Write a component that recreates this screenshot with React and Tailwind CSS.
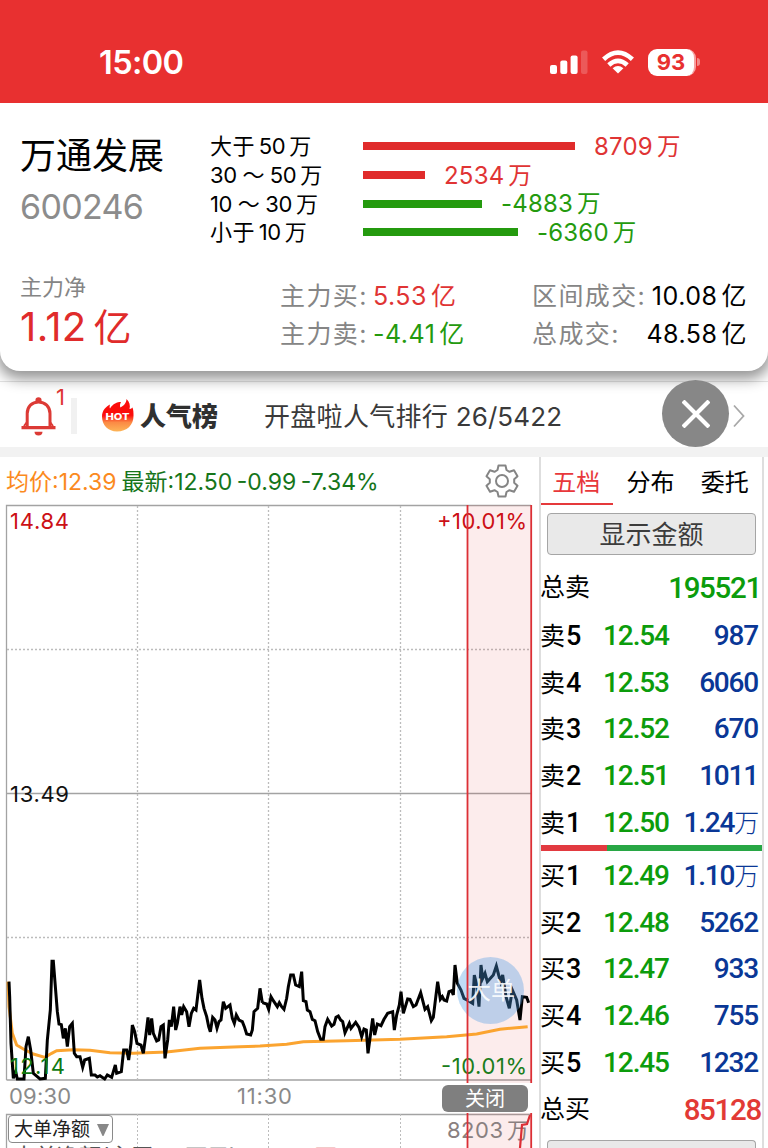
import clsx from 'clsx'

const FLOWS = [
  { label: ['大于', '50', '万'], width: 212, value: '8709', up: true },
  { label: ['', '30 ～ 50', '万'], width: 62, value: '2534', up: true },
  { label: ['', '10 ～ 30', '万'], width: 119, value: '-4883', up: false },
  { label: ['小于', '10', '万'], width: 155, value: '-6360', up: false },
]

const SELLS = [
  ['5', '12.54', '987'],
  ['4', '12.53', '6060'],
  ['3', '12.52', '670'],
  ['2', '12.51', '1011'],
  ['1', '12.50', '1.24万'],
]

const BUYS = [
  ['1', '12.49', '1.10万'],
  ['2', '12.48', '5262'],
  ['3', '12.47', '933'],
  ['4', '12.46', '755'],
  ['5', '12.45', '1232'],
]

// price line, third-of-a-pixel units, morning then afternoon
const PRICE_AM =
  '27,155 29,200 33,340 40,445 47,425 52,447 72,447 78,350 85,320 92,360 100,430 120,447 136,445 142,330 151,240 156,94 160,94 172,245 177,282 184,284 190,325 196,295 202,350 209,290 217,280 223,370 230,380 240,380 248,412 254,390 268,385 274,435 285,435 292,441 300,437 314,447 322,435 335,442 346,405 350,430 364,425 371,360 380,360 386,390 393,340 397,285 404,305 411,340 423,345 430,370 437,320 444,262 449,315 455,265 460,310 470,333 476,330 483,290 490,285 495,385 503,330 508,270 514,290 521,230 527,300 532,280 540,230 545,255 551,230 560,245 567,290 574,250 581,235 588,240 599,150 606,205 612,235 620,260 626,290 631,305 638,262 645,270 651,295 657,275 663,270 670,215 677,235 690,225 697,265 703,280 709,255 717,270 727,275 733,290 740,312 752,315 757,300 762,245 773,235 780,175 787,218'
const PRICE_PM =
  '7,218 20,222 26,238 33,200 40,212 52,230 58,218 65,230 72,238 80,205 85,170 92,135 100,135 107,165 118,170 125,125 130,212 138,215 142,240 150,245 157,268 165,272 173,305 182,328 190,328 195,290 203,268 215,288 222,283 228,262 235,258 242,270 248,275 255,308 268,280 273,295 287,277 297,292 305,320 312,297 319,300 324,370 332,310 338,265 344,315 352,282 363,287 372,268 383,250 398,245 403,300 410,255 418,225 423,185 430,250 443,207 450,208 460,230 468,225 482,188 489,215 495,238 503,230 514,272 520,262 525,220 533,155 541,208 547,200 552,210 560,213 567,185 575,182 580,195 585,105 592,160 603,180 612,205 625,212 638,220 643,135 650,165 657,230 663,105 668,145 675,130 682,155 700,135 709,108 716,135 722,155 728,135 738,200 748,235 757,180 770,210 780,270 787,200 800,202 806,218'
const AVERAGE =
  '24,155 27,230 37,310 50,345 70,357 100,372 135,382 155,370 170,362 220,359 270,361 330,368 400,370 500,366 600,355 720,350 780,348 860,343 910,335 1040,332 1200,328 1340,320 1430,312 1500,298 1583,290'

function StatusBar() {
  return (
    <header className="flex h-[103px] items-center bg-[#e83030] pt-[21px] pl-[99px] text-white">
      <span className="w-[451px] pt-[2px] text-[32.5px] font-semibold tracking-[-0.6px]">15:00</span>
      <svg className="h-[24px] w-[38px]" viewBox="0 0 38 24" fill="currentColor">
        <rect x="0" y="15" width="7" height="9" rx="2" />
        <rect x="10.3" y="10.5" width="7" height="13.5" rx="2" />
        <rect x="20.6" y="5.5" width="7" height="18.5" rx="2" />
        <rect x="31" y="0.5" width="6.5" height="23.5" rx="2" opacity="0.2" />
      </svg>
      <svg className="ml-[14px] h-[24px] w-[32px]" viewBox="0 0 32 24" fill="none" stroke="currentColor" strokeWidth="4.6">
        <path d="M1.6 9.3Q16 -4 30.4 9.3" />
        <path d="M6.8 15Q16 6.6 25.2 15" />
        <path d="M16 23.4L10.6 18.2Q16 13.6 21.4 18.2Z" fill="currentColor" stroke="none" />
      </svg>
      <div className="ml-[14px] flex items-center">
        <span className="flex h-[27px] w-[48px] items-center justify-center rounded-[9px] border-r-2 border-[#f6a0a0] bg-white text-[22px] font-bold text-[#e83030]">
          93
        </span>
        <span className="ml-px h-[8px] w-[3px] rounded-r-full bg-[#f18a8a]" />
      </div>
    </header>
  )
}

function Amount({ value, className }) {
  return (
    <span className={clsx('flex gap-[4px] tracking-[0.5px]', className)}>
      {value}
      <span>亿</span>
    </span>
  )
}

function Summary() {
  return (
    <section className="relative z-10 h-[268px] rounded-b-[20px] bg-white px-[20px] pt-[29px] shadow-[0_5px_14px_3px_rgba(0,0,0,0.42)] [clip-path:inset(0_0_-40px_0)]">
      <div className="flex">
        <div className="w-[190px]">
          <h1 className="h-[49px] text-[36px] leading-[48px]">万通发展</h1>
          <div className="text-[34px] leading-[51px] tracking-[-0.7px] text-[#8c8c8c]">600246</div>
        </div>
        <div>
          {FLOWS.map((f) => (
            <div key={f.value} className="flex h-[28.7px] items-center">
              <span className="flex w-[153px] gap-[4px] text-[22px] leading-none">
                {f.label[0] && <span className="tracking-[0.4px]">{f.label[0]}</span>}
                <span className="tracking-[-0.4px]">{f.label[1]}</span>
                <span>{f.label[2]}</span>
              </span>
              <span className={clsx('h-[8px]', f.up ? 'bg-[#e02b2b]' : 'bg-[#249a0e]')} style={{ width: f.width }} />
              <span className={clsx('ml-[19px] flex gap-[4px] pt-px text-[24px] leading-none', f.up ? 'text-[#e03434]' : 'text-[#249a0e]')}>
                <span className="tracking-[0.2px]">{f.value}</span>
                <span className="text-[23.5px]">万</span>
              </span>
            </div>
          ))}
        </div>
      </div>
      <div className="mt-[27px] flex">
        <div className="w-[260px]">
          <div className="text-[22px] leading-[27px] text-[#858585]">主力净</div>
          <div className="flex gap-[7px] text-[40px] leading-[52px] tracking-[0.4px] text-[#e02b2b]">
            1.12<span className="text-[38px]">亿</span>
          </div>
        </div>
        <div className="w-[252px] pt-[3px] text-[25px] leading-[38px] text-[#858585]">
          <div className="flex">
            <span className="w-[93px] tracking-[1.4px]">主力买:</span>
            <Amount value="5.53" className="text-[#e03434]" />
          </div>
          <div className="flex">
            <span className="w-[93px] tracking-[1.4px]">主力卖:</span>
            <Amount value="-4.41" className="text-[#249a0e]" />
          </div>
        </div>
        <div className="w-[215px] pt-[3px] text-[25px] leading-[38px] text-[#858585]">
          <div className="flex justify-between">
            <span className="tracking-[1.4px]">区间成交:</span>
            <Amount value="10.08" className="text-black" />
          </div>
          <div className="flex justify-between">
            <span className="tracking-[1.4px]">总成交:</span>
            <Amount value="48.58" className="text-black" />
          </div>
        </div>
      </div>
    </section>
  )
}

function HotRow() {
  return (
    <section className="h-[86px] border-b-[10px] border-[#f2f2f2] pt-[10px]">
      <div className="relative flex h-[66px] items-center border-t border-[#e4e4e4] pl-[21px]">
        <svg className="mt-[4px] h-[39px] w-[35px]" viewBox="0 0 35 39" fill="none" stroke="#dc3a35" strokeWidth="3">
          <path d="M6.2 31V16.5C6.2 9.5 11 5 17.5 5S29 9.5 29 16.5V31" />
          <path d="M0.5 30.7H34.5" strokeWidth="3.2" />
          <path d="M3 29L6 25M32 29L29 25" strokeWidth="2" />
          <path d="M14.5 5V2.8A3 2.6 0 0 1 20.5 2.8V5Z" fill="#dc3a35" stroke="none" />
          <path d="M13.5 34.8H21.5A4 3.6 0 0 1 13.5 34.8Z" fill="#dc3a35" stroke="none" />
        </svg>
        <span className="w-[15px] self-start pt-[4px] text-[22px] leading-[22px] text-[#e03434]">1</span>
        <span className="mt-[2px] h-[36px] w-[6px] bg-[#f1f1f1]" />
        <svg className="ml-[24px] h-[34px] w-[33px]" viewBox="0 0 33 34">
          <defs>
            <linearGradient id="flame" x1="0" y1="0" x2="0" y2="1">
              <stop offset="0.5" stopColor="#fb0d0b" />
              <stop offset="0.72" stopColor="#fb8a45" />
              <stop offset="1" stopColor="#fdb557" />
            </linearGradient>
          </defs>
          <path
            d="M16 33.5C7 33.5 1 27 1 18.5C1 12 5.5 8.5 9 6.5C8.5 8.5 8.5 9.5 9 10.5C12 5.5 16 4 20 4C19 6 18.5 8 19.5 9.5C22.5 8 25.5 5 25.5 1C28.5 4 29.5 7.5 28.5 11C29.5 11 30.5 10.5 31.5 9.5C32.5 12 32.5 15 32.5 18C32.5 27 26 33.5 16 33.5Z"
            fill="url(#flame)"
          />
          <text x="16.5" y="22" textAnchor="middle" fill="#fff" fontSize="9" fontWeight="800" textLength="24" lengthAdjust="spacingAndGlyphs">
            HOT
          </text>
        </svg>
        <span className="ml-[6px] w-[124px] pt-[3px] text-[26px] font-black text-[#2f3030]">人气榜</span>
        <span className="pt-[4px] text-[26px] tracking-[0.3px] text-[#3a3a3a]">
          开盘啦人气排行 <span className="tracking-[0.1px]">26/5422</span>
        </span>
        <svg className="absolute top-[22px] left-[733px] h-[24px] w-[12px]" viewBox="0 0 12 24" fill="none" stroke="#a8a8a8" strokeWidth="1.8">
          <path d="M1 1.5L10.5 12L1 22.5" />
        </svg>
        <button className="absolute -top-[2px] left-[662px] z-20 flex size-[67px] items-center justify-center rounded-full bg-[#878787]">
          <svg className="size-[28px]" viewBox="0 0 28 28" stroke="#fff" strokeWidth="4.2">
            <path d="M1 1L27 27M27 1L1 27" />
          </svg>
        </button>
      </div>
    </section>
  )
}

function PriceChart() {
  return (
    <svg className="block h-[580px] w-[539px]" viewBox="0 504 539 580" fontSize="22">
      <g fill="none" stroke="#a3a3a3" strokeWidth="1.3">
        <path d="M6.5 1080V505.5H531M6.5 793.5H531M6.5 1080H531" />
        <path d="M137.5 506V1080M268.5 506V1080M400.5 506V1080M7 649.5H531M7 937.5H531" strokeDasharray="2 2" stroke="#bcbcbc" />
      </g>
      <rect x="467" y="505" width="64" height="578" fill="#e02b2b" fillOpacity="0.09" />
      <g transform="translate(0 930) scale(0.33333)" fill="none" strokeWidth="9" strokeLinejoin="miter">
        <polyline points={AVERAGE} stroke="#fba430" />
        <polyline points={PRICE_AM} stroke="#000" />
        <polyline points={PRICE_PM} stroke="#000" transform="translate(780 0)" />
      </g>
      <text x="10" y="529" fill="#cc1016" textLength="59">14.84</text>
      <text x="437" y="529" fill="#cc1016" textLength="90">+10.01%</text>
      <text x="10" y="802" fill="#111" textLength="59">13.49</text>
      <text x="10" y="1074" fill="#0f7a12" textLength="55">12.14</text>
      <text x="441" y="1074" fill="#1b7d1b" textLength="86">-10.01%</text>
      <circle cx="490.5" cy="990.5" r="33.5" fill="#4a9be4" fillOpacity="0.35" />
      <text x="467" y="999" fill="#fff" fillOpacity="0.9" fontSize="24" textLength="48">大单</text>
      <path d="M467.5 505V1083M531.2 505V1083" stroke="#dc2f35" strokeWidth="1.8" />
    </svg>
  )
}

function VolumeChart() {
  return (
    <div className="relative h-[35px] overflow-hidden">
      <svg className="block h-[35px] w-[539px]" viewBox="0 1113 539 35" fontSize="22">
        <path d="M6.5 1148V1114.5H531" fill="none" stroke="#a3a3a3" strokeWidth="1.3" />
        <path d="M137.5 1114V1148M268.5 1114V1148M400.5 1114V1148" stroke="#bcbcbc" strokeDasharray="2 2" />
        <rect x="467" y="1113" width="64" height="35" fill="#e02b2b" fillOpacity="0.09" />
        <text x="447" y="1138" fill="#8a8080" textLength="56">8203</text>
        <text x="507" y="1138" fill="#8a8080">万</text>
        <path d="M520 1148L522 1125L527 1124L530 1115" fill="none" stroke="#dc2f35" strokeWidth="2.2" />
        <path d="M467.5 1113V1148M531.2 1113V1148" stroke="#dc2f35" strokeWidth="1.8" />
      </svg>
      <button className="absolute top-[2px] left-[8px] flex h-[28px] w-[105px] items-center gap-[7px] rounded-[4px] border-[1.5px] border-[#8a8a8a] bg-white pt-px pl-[5px] text-[19px] leading-none whitespace-nowrap text-[#222]">
        大单净额
        <svg className="h-[12px] w-[12px] shrink-0" viewBox="0 0 12 12" fill="#888">
          <path d="M0 0H12L6.5 12H5.5Z" />
        </svg>
      </button>
      <div className="absolute top-[30px] left-[13px] flex text-[22px] leading-[26px] whitespace-nowrap text-[#555]">
        <span className="w-[145px]">大单净额(主买</span>
        <span className="w-[110px] text-[#999]">20万元)</span>
        <span className="text-[#eaa5a5]">0.00万</span>
      </div>
    </div>
  )
}

function QuoteRow({ side, level, price, amount }) {
  const wan = amount.endsWith('万')
  return (
    <div className="flex h-[46.8px] items-center pt-[3px] font-[Roboto,'Noto_Sans_CJK_SC',sans-serif] text-[28px] font-medium">
      <span className="-ml-px w-[63px] whitespace-nowrap text-black">
        <span className="text-[25px] font-normal">{side}</span>
        <span className="ml-px text-[27px]">{level}</span>
      </span>
      <span className="tracking-[-1.1px] text-[#0c9c0c]">{price}</span>
      <span className="ml-auto pr-[4px] tracking-[-1.2px] whitespace-nowrap text-[#0a3796]">
        {wan ? amount.slice(0, -1) : amount}
        {wan && <span className="text-[25px] font-light">万</span>}
      </span>
    </div>
  )
}

function TotalRow({ label, value, className }) {
  return (
    <div className="flex h-[48px] items-center justify-between pt-px font-[Roboto,'Noto_Sans_CJK_SC',sans-serif]">
      <span className="-ml-px pt-px text-[25px]">{label}</span>
      <span className={clsx('pr-px pt-px text-[29.5px] font-medium tracking-[-1.3px]', className)}>{value}</span>
    </div>
  )
}

function OrderBook() {
  return (
    <aside className="h-[691px] w-[225px] border-x-2 border-[#dedede]">
      <nav className="flex h-[48px] text-[24px] leading-[52px]">
        <span className="w-[73px] border-b-[2.5px] border-[#e5393b] pr-[2px] text-center text-[#e8383b]">五档</span>
        <span className="w-[75px] text-center">分布</span>
        <span className="w-[75px] text-center">委托</span>
      </nav>
      <button className="mt-[8px] ml-[6px] flex h-[42px] w-[209px] items-center justify-center rounded-[4px] border-[1.5px] border-[#a5a5a5] bg-[#e9e9e9] pt-[2px] text-[26px] leading-none text-[#3c3c3c]">
        显示金额
      </button>
      <div className="mt-[8px]">
        <TotalRow label="总卖" value="195521" className="text-[#0c9c0c]" />
        {SELLS.map(([level, price, amount]) => (
          <QuoteRow key={level} side="卖" level={level} price={price} amount={amount} />
        ))}
        <div className="flex h-[6px]">
          <span className="w-[66px] bg-[#e23a40]" />
          <span className="flex-1 bg-[#28a745]" />
        </div>
        {BUYS.map(([level, price, amount]) => (
          <QuoteRow key={level} side="买" level={level} price={price} amount={amount} />
        ))}
        <TotalRow label="总买" value="85128" className="text-[#e23a35]" />
      </div>
      <div className="mt-[7px] ml-[6px] h-[10px] w-[209px] rounded-t-[4px] border-[1.5px] border-b-0 border-[#a5a5a5] bg-[#e9e9e9]" />
    </aside>
  )
}

export default function App() {
  return (
    <main className="h-[1148px] w-[768px] overflow-hidden bg-white font-[Inter,'Noto_Sans_CJK_SC',sans-serif] text-black">
      <StatusBar />
      <Summary />
      <HotRow />
      <div className="flex">
        <section className="w-[539px]">
          <div className="flex h-[47px] items-center justify-between pr-[20px] pl-[6px] text-[23px]">
            <span className="flex gap-[5px] pt-[3px] whitespace-nowrap [word-spacing:-2px]">
              <span className="text-[#fb8a1e]">均价:12.39</span>
              <span className="text-[#15751a]">最新:12.50 -0.99 -7.34%</span>
            </span>
            <svg className="size-[34px]" viewBox="0 0 34 34" fill="none" stroke="#858585" strokeWidth="2" strokeLinejoin="round">
              <path d="M13.5 1.5H20.5L21.5 6L24.5 7.8L29 6.3L32.5 12.3L29.2 15.3V18.7L32.5 21.7L29 27.7L24.5 26.2L21.5 28L20.5 32.5H13.5L12.5 28L9.5 26.2L5 27.7L1.5 21.7L4.8 18.7V15.3L1.5 12.3L5 6.3L9.5 7.8L12.5 6Z" />
              <circle cx="17" cy="17" r="6" />
            </svg>
          </div>
          <PriceChart />
          <div className="flex h-[29px] items-center text-[22px] text-[#8a8a8a]">
            <span className="w-[228px] pb-[4px] pl-[9px] tracking-[0.2px]">09:30</span>
            <span className="w-[214px] pb-[4px] pl-[9px] tracking-[0.8px]">11:30</span>
            <button className="flex h-[27px] w-[86px] items-center justify-center rounded-[6px] bg-[#7f7f7f] text-[20px] leading-none text-white">关闭</button>
          </div>
          <VolumeChart />
        </section>
        <OrderBook />
      </div>
    </main>
  )
}
